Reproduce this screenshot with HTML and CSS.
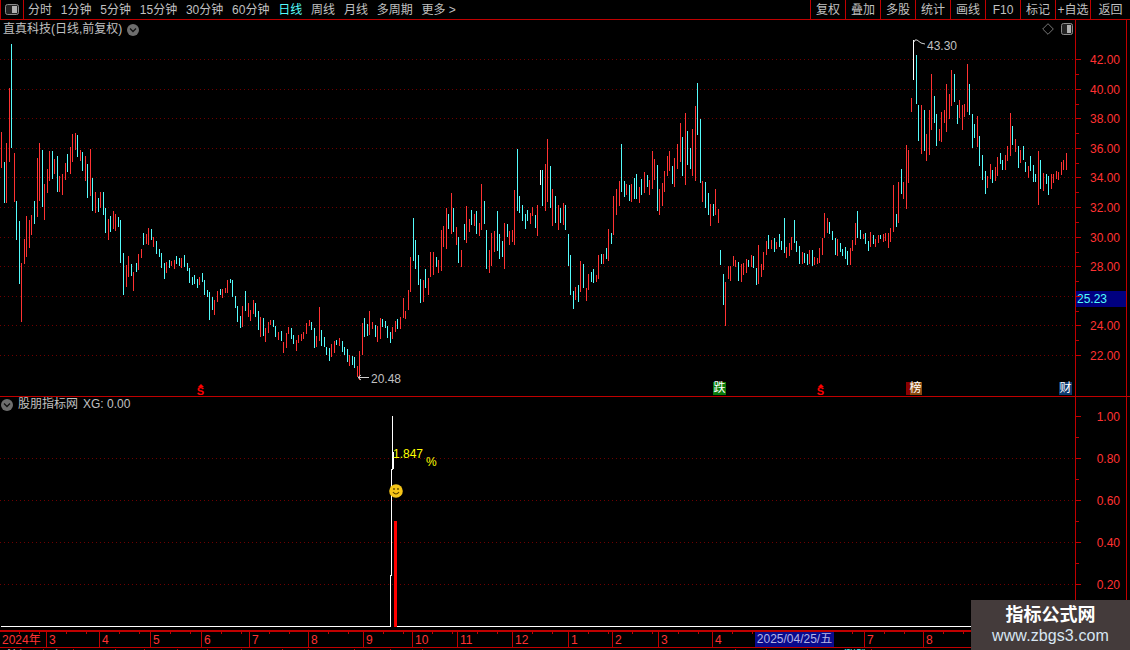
FILE: index.html
```html
<!DOCTYPE html>
<html lang="zh-CN">
<head>
  <meta charset="UTF-8">
  <title>直真科技 日线</title>
  <link rel="stylesheet" href="styles.css">
</head>
<body>

  <!-- Top toolbar -->
  <div class="toolbar">
    <div class="panel-btn">
      <svg width="14" height="11" viewBox="0 0 14 11">
        <rect x="0.5" y="0.5" width="13" height="10" rx="2" fill="#222" stroke="#8a8a8a"/>
        <rect x="7" y="2" width="5" height="7" fill="#b0b0b0"/>
      </svg>
    </div>
    <div class="periods">
      <span>分时</span>
      <span>1分钟</span>
      <span>5分钟</span>
      <span>15分钟</span>
      <span>30分钟</span>
      <span>60分钟</span>
      <span class="active">日线</span>
      <span>周线</span>
      <span>月线</span>
      <span>多周期</span>
      <span>更多 &gt;</span>
    </div>
    <div class="actions">
      <span>复权</span>
      <span>叠加</span>
      <span>多股</span>
      <span>统计</span>
      <span>画线</span>
      <span>F10</span>
      <span>标记</span>
      <span>+自选</span>
      <span>返回</span>
    </div>
  </div>

  <!-- Price chart -->
  <div class="panel panel-main">
    <div class="plot">
      <svg id="price-plot" class="plot-svg" viewBox="0 20 1075 376"></svg>
      <div class="plot-title">
        <span>直真科技(日线,前复权)</span>
        <svg class="chevron" width="12" height="12" viewBox="0 0 12 12">
          <circle cx="6" cy="6" r="6" fill="#6e6e6e"/>
          <path d="M3 4.5 L6 7.5 L9 4.5" fill="none" stroke="#111" stroke-width="1.3"/>
        </svg>
      </div>
      <div class="plot-tools">
        <svg width="12" height="12" viewBox="0 0 12 12">
          <path d="M6 0.7 L11.3 6 L6 11.3 L0.7 6 Z" fill="none" stroke="#777"/>
        </svg>
        <svg width="12" height="12" viewBox="0 0 12 12">
          <rect x="0.5" y="0.5" width="11" height="11" rx="2" fill="#222" stroke="#8a8a8a"/>
          <rect x="6" y="2" width="4" height="8" fill="#b0b0b0"/>
        </svg>
      </div>
      <div class="badge badge-down">跌</div>
      <div class="badge badge-rank">榜</div>
      <div class="badge badge-fin">财</div>
      <div class="s-mark s-mark-a"><i></i>S</div>
      <div class="s-mark s-mark-b"><i></i>S</div>
    </div>
    <svg id="price-axis" class="axis" viewBox="1076 20 50 376"></svg>
  </div>

  <!-- Indicator chart -->
  <div class="panel panel-sub">
    <div class="plot">
      <svg id="sub-plot" class="plot-svg" viewBox="0 397 1075 233"></svg>
      <div class="plot-title plot-title-sub">
        <svg class="chevron" width="12" height="12" viewBox="0 0 12 12">
          <circle cx="6" cy="6" r="6" fill="#6e6e6e"/>
          <path d="M3 4.5 L6 7.5 L9 4.5" fill="none" stroke="#111" stroke-width="1.3"/>
        </svg>
        <span>股朋指标网</span>
        <span>XG: 0.00</span>
      </div>
    </div>
    <svg id="sub-axis" class="axis" viewBox="1076 397 50 233"></svg>
  </div>

  <!-- Time axis -->
  <div class="time-axis" id="time-axis">
    <div class="cursor-date">2025/04/25/五</div>
  </div>

  <!-- Status bar, cut off by the window -->
  <div class="status-bar" id="status-bar"></div>

  <div class="watermark">
    <div class="watermark-name">指标公式网</div>
    <div class="watermark-url">www.zbgs3.com</div>
  </div>

  <script src="chart.js"></script>
</body>
</html>
```

FILE: styles.css
```css
/* Trading terminal, dark theme */

* {
  box-sizing: border-box;
  margin: 0;
  padding: 0;
}

html, body {
  width: 1130px;
  height: 650px;
  overflow: hidden;
}

body {
  position: relative;
  background: #000;
  color: #c0c0c0;
  font-family: "Liberation Sans", "Noto Sans CJK SC", sans-serif;
  font-size: 12px;
}

.toolbar {
  display: flex;
  height: 20px;
  border-bottom: 1px solid #c00000;
  line-height: 20px;
}

.panel-btn {
  display: flex;
  align-items: center;
  justify-content: center;
  width: 24px;
  border-left: 1px solid #c00000;
  border-right: 1px solid #c00000;
}

.periods {
  display: flex;
  flex: 1;
  gap: 8.8px;
  padding-left: 4px;
}

.periods .active {
  color: #54fcfc;
}

.actions {
  display: flex;
  width: 320px;
}

.actions span {
  width: 35px;
  border-left: 1px solid #c00000;
  text-align: center;
}

.actions span:last-child {
  flex: 1;
}

.panel {
  display: flex;
  border-bottom: 1px solid #c00000;
}

.panel-main {
  height: 377px;
}

.panel-sub {
  height: 234px;
}

.plot {
  position: relative;
  width: 1075px;
}

.plot-svg {
  display: block;
  width: 1075px;
  height: 100%;
}

.axis {
  display: block;
  width: 52px;
  height: 100%;
  border-left: 1px solid #c00000;
  border-right: 1px solid #c00000;
}

.plot-title {
  position: absolute;
  left: 3px;
  top: 2px;
  display: flex;
  align-items: center;
  gap: 5px;
  line-height: 15px;
}

.plot-title-sub {
  left: 1px;
  top: 0;
  gap: 5px;
}

.chevron {
  flex: none;
}

.plot-tools {
  position: absolute;
  right: 2px;
  top: 3px;
  display: flex;
  gap: 7px;
}

.badge {
  position: absolute;
  top: 362px;
  width: 13px;
  height: 13px;
  color: #fff;
  font-size: 12px;
  line-height: 13px;
  text-align: center;
}

.badge-down {
  left: 713px;
  background: #0a7a0a;
}

.badge-rank {
  left: 906px;
  width: 16px;
  padding-left: 3px;
  background: linear-gradient(90deg, #8c0000 0 4px, #8a4a10 4px);
}

.badge-fin {
  left: 1059px;
  background: #0f3a6e;
}

.s-mark {
  position: absolute;
  top: 364px;
  width: 9px;
  color: #ff0000;
  font-size: 11px;
  font-weight: bold;
  line-height: 9px;
  text-align: center;
}

.s-mark i {
  display: block;
  width: 0;
  height: 0;
  margin: 0 auto;
  border-left: 3px solid transparent;
  border-right: 3px solid transparent;
  border-bottom: 3px solid #ff0000;
}

.s-mark-a {
  left: 196px;
}

.s-mark-b {
  left: 816px;
}

.time-axis {
  position: relative;
  display: flex;
  height: 17px;
  border-top: 1px solid #c00000;
  border-bottom: 1px solid #c00000;
  color: #ff3232;
  font-size: 12px;
  line-height: 16px;
}

.time-cell {
  flex: none;
  padding-left: 2px;
  border-right: 1px solid #c00000;
  background: repeating-linear-gradient(90deg, transparent 0 19px, #c00000 19px 20px) 0 0 / 100% 2px no-repeat;
}

.cursor-date {
  position: absolute;
  left: 755px;
  top: 0;
  width: 79px;
  height: 15px;
  background: #0a0a8c;
  color: #b4b4e6;
  font-size: 12px;
  line-height: 15px;
  text-align: center;
  z-index: 1;
}

.status-bar {
  display: flex;
  height: 17px;
  padding-top: 1px;
  line-height: 14px;
}

.status-cell {
  flex: none;
  padding-left: 7px;
  border-right: 1px solid #c00000;
  color: #e0e0e0;
  white-space: nowrap;
}

.status-cell.rise {
  padding-left: 36px;
  color: #54fcfc;
}

.watermark {
  position: absolute;
  left: 971px;
  top: 600px;
  width: 159px;
  height: 50px;
  padding-top: 5px;
  background: #443b3b;
  text-align: center;
}

.watermark-name {
  color: #fff;
  font-size: 18px;
  font-weight: bold;
  line-height: 21px;
}

.watermark-url {
  color: #d8e6f2;
  font-size: 16px;
  letter-spacing: 0.1px;
  line-height: 20px;
}

/* chart drawing */

.grid {
  fill: none;
  stroke: #6e0000;
  stroke-dasharray: 1 3;
  shape-rendering: crispEdges;
}

.bars {
  fill: none;
  shape-rendering: crispEdges;
}

.bars-rise {
  stroke: #ff3232;
}

.bars-fall {
  stroke: #54fcfc;
}

.bars-plain {
  stroke: #fff;
}

.tick {
  fill: none;
  stroke: #c00000;
  shape-rendering: crispEdges;
}

.axis-label {
  fill: #ff3232;
  font-size: 12px;
  text-anchor: end;
}

.last-box {
  fill: #000080;
}

.last-label {
  fill: #54fcfc;
  font-size: 12px;
}

.peak-line {
  fill: none;
  stroke: #d0d0d0;
}

.peak-label {
  fill: #c0c0c0;
  font-size: 12px;
}

.signal {
  fill: none;
  stroke: #fff;
  shape-rendering: crispEdges;
}

.signal-bar {
  fill: #ff0000;
}

.signal-text {
  fill: #ffff00;
  font-size: 12px;
}

.smile-face {
  fill: #f5c518;
}

.smile-line {
  fill: none;
  stroke: #5a4300;
  stroke-width: 1.2;
}

.smile-eye {
  fill: #5a4300;
}
```

FILE: chart.js
```js
// Bars are read off the chart at 3x, so each segment has its own origin.
// r = up bar, c = down bar, w = flat bar; then x, top, bottom.
const segments = [
  [0, 120, "r4,36,144 c13,126,249 r19,69,249 r28,-96,126 c34,-228,84 r43,99,246 c49,243,360 c58,303,492 r64,429,606 r73,357,432 r79,288,411 r88,300,384 r94,285,345 c103,243,312 r112,114,291 r118,69,243 c127,90,261 r133,192,300 r142,147,219 r148,93,183 c157,93,177 r163,117,162 c172,108,216 r178,168,216 r187,162,225 r196,129,180 c202,102,156 r211,81,162 r217,42,126 r226,39,90 c232,45,111 r241,90,123 c247,96,153 r256,108,183 c262,132,234 r271,87,228 c277,174,273 r286,216,279 c295,234,276 r301,216,264 c310,216,285 c316,264,339 r325,297,360 c331,288,336 r340,273,327 r346,282,333 c355,291,321 c361,300,429 c370,399,525 r379,435,501 r385,408,471 c394,432,468 r400,456,513 c409,429,456 r415,402,450 r424,387,414 c430,339,375 r439,342,372 r445,324,375 c454,327,360 r460,351,381 c469,363,402 c478,387,411 c484,399,444 c493,429,477 r499,426,459 c508,420,444 r514,423,438 r523,420,447 c529,408,432 c538,414,438 r544,414,444 c553,405,441 c562,429,453 c568,444,489 c577,471,495 c583,465,492 c592,477,504 r598,471,495 c607,459,486 c613,480,525 c622,510,531 c628,516,600 c637,531,570 r643,540,585 r652,513,546 c661,507,525 r667,507,534 r676,504,519 r682,480,519 c691,477,489 c697,480,531 c706,528,564 c712,558,606 c721,588,624 r727,558,621 c736,513,573 r745,549,591 r751,570,603 r760,540,582 c766,549,591 c775,573,630 r781,591,651 c790,594,648 r796,624,666 r805,606,639 r811,600,615 c820,600,621 c826,618,651 r835,636,660 c844,633,663 r850,666,699 r859,639,684 r865,621,642 c874,624,657 c880,645,672 r889,660,693 r895,645,669 r904,642,663 r910,636,657 r919,609,642 r928,600,618 c934,606,630 c943,624,684 r949,648,681 r958,561,663 c964,630,678 c973,651,681 c979,681,705 c988,684,723 r994,672,711 r1003,663,699 c1009,660,675 r1018,654,678 c1027,663,696 c1033,681,705 c1042,687,726 r1048,705,738 c1057,708,735 c1063,711,744 r1072,738,771 r1078,693,780"],
  [350, 80, "r37,729,825 c43,714,771 c52,732,768 r58,693,765 r67,726,747 c76,735,771 r82,738,786 r91,714,777 c97,717,741 c106,723,744 c112,738,774 c121,756,789 r127,741,777 r136,723,756 c142,717,747 r151,711,747 r160,654,714 r166,693,717 r175,630,690 r181,531,636 c190,414,543 c196,480,567 c205,525,615 c211,597,669 r220,600,666 c226,567,624 r235,594,645 r241,516,591 r250,516,585 c259,531,561 r265,540,579 r274,450,573 r280,438,501 r289,384,507 c295,402,447 r304,339,462 c310,384,456 r319,441,495 c325,471,549 r334,510,561 c343,432,480 r349,378,489 r358,417,456 c364,390,435 r373,402,438 c379,393,462 r388,429,468 r394,312,450 c403,363,432 c409,450,567 r418,510,579 r424,459,558 r433,453,516 c442,393,513 c448,462,537 c457,483,531 r463,429,567 c472,432,471 r478,453,495 r487,450,486 r493,330,495 c502,207,393 c508,348,399 c517,375,423 c526,402,447 c532,390,423 r541,399,432 r547,381,408 c556,405,444 r562,375,468 w571,270,315 c577,270,378 r586,252,393 r592,177,366 c601,258,384 r607,327,438 c616,348,429 r625,375,450 c631,384,429 r640,369,435 c646,375,450 c655,462,558 c661,525,645 c670,633,687 r676,621,660 c685,615,666 r691,543,636 c700,552,624 r709,624,663 r715,582,630 c724,576,606 c730,567,609 r739,585,606 r745,525,597 c754,522,552 r760,522,552 c769,504,537 r775,447,543 c784,459,492 r790,348,465 r799,327,405 r808,303,378 c814,192,336 c823,303,351 r829,312,345 c838,315,363 r844,312,366 c853,294,357 c859,282,357 r868,321,369 c874,297,345 r883,276,339 c892,285,321 r898,300,345 r907,213,327 r913,237,300 c922,255,393 r928,327,405 r937,309,378 r943,273,336 r952,228,288 r958,213,273 c967,258,312 r973,234,321 r982,192,267 r991,129,246 c997,171,288 r1006,99,315 c1012,153,255 c1021,204,267 r1027,147,288 r1036,78,303 c1042,9,165 c1051,117,309 r1057,303,366 c1066,306,384 c1075,339,405 r1081,372,438 c1090,372,408 r1096,327,405 r1105,387,429"],
  [700, 130, "c61,360,405 c70,432,525 r76,456,588 r85,408,447 r91,408,453 r100,378,408 r106,390,411 c115,396,453 r124,402,456 r130,399,435 r139,387,429 c145,390,411 r154,375,411 c160,378,414 c169,414,465 r175,345,462 r184,402,441 r190,366,420 r199,333,375 c205,315,357 r214,330,357 c223,324,366 r229,336,357 c238,312,351 c244,333,360 c253,264,369 r259,351,384 r268,339,378 r274,321,360 c283,270,339 c289,333,366 c298,348,402 r307,366,402 c313,369,399 c322,372,405 r328,360,402 c337,360,408 r343,381,405 r352,384,402 r358,354,399 r367,324,375 r373,249,324 r382,264,309 c388,276,312 c397,303,330 c406,324,375 r412,327,378 c421,339,366 c427,357,378 c436,351,387 c442,363,405 r451,354,405 r457,330,363 r466,279,345 c472,243,324 c481,300,327 r490,312,327 c496,309,342 c505,333,363 r511,306,351 c520,315,342 r526,327,351 r535,315,339 c541,315,327 r550,312,336 r556,309,333 r565,309,354 r571,294,336 r580,165,306 c589,252,291 r595,156,279 c604,117,192 r610,156,207 r619,45,237 r625,60,159"],
  [880, 30, "r94,204,246 w100,30,150 c109,75,222 c115,225,333 r124,225,372 c133,240,363 r139,312,393 r148,240,375 r154,132,300 c163,198,279 c169,252,348 r178,297,333 r184,246,336 r193,240,279 r199,162,306 r208,192,267 r214,120,228 c223,132,216 c232,225,282 r238,210,264 r247,225,300 r253,222,261 r262,102,246 c268,162,255 c277,252,354 c283,282,324 r292,258,351 c298,318,408 c307,375,450 c316,423,492 r322,438,474 r331,402,447 c337,420,459 r346,411,453 r352,381,438 c361,369,402 c367,390,420 r376,375,420 r382,348,393 r391,249,378 c397,288,345 r406,327,366 c415,348,414 r421,360,399 c430,348,390 c436,396,426 r445,408,444 c451,378,423 c460,405,456 c466,432,456 r475,363,525 c481,390,477 r490,429,483 c499,432,462 c505,438,495 r514,432,477 r520,432,459 r529,423,447 r535,426,450 r544,396,435 r550,390,420 r559,369,420"]
];

const SVG_NS = "http://www.w3.org/2000/svg";

function add(svg, tag, attrs, text) {
  const node = document.createElementNS(SVG_NS, tag);
  for (const key in attrs) {
    node.setAttribute(key, attrs[key]);
  }
  if (text) {
    node.textContent = text;
  }
  svg.appendChild(node);
  return node;
}

function drawGrid(svg, levels) {
  const d = levels.map(l => "M0 " + (l.y + 0.5) + "H1075").join("");
  add(svg, "path", { class: "grid", d: d });
}

function drawAxis(svg, levels) {
  let d = "";
  levels.forEach((l, i) => {
    d += "M1076 " + (l.y + 0.5) + "h5";
    const next = levels[i + 1];
    if (next) {
      d += "M1076 " + (Math.round((l.y + next.y) / 2) + 0.5) + "h3";
    }
    add(svg, "text", { class: "axis-label", x: 1120, y: l.y + 5 }, l.label);
  });
  add(svg, "path", { class: "tick", d: d });
}

// Price panel
const pricePlot = document.getElementById("price-plot");
const priceAxis = document.getElementById("price-axis");
const priceLevels = [
  { y: 59, label: "42.00" },
  { y: 89, label: "40.00" },
  { y: 118, label: "38.00" },
  { y: 148, label: "36.00" },
  { y: 177, label: "34.00" },
  { y: 207, label: "32.00" },
  { y: 237, label: "30.00" },
  { y: 266, label: "28.00" },
  { y: 296, label: "" },
  { y: 325, label: "24.00" },
  { y: 355, label: "22.00" }
];

drawGrid(pricePlot, priceLevels);

const paths = { r: "", c: "", w: "" };
segments.forEach(([ox, oy, list]) => {
  list.split(" ").forEach(item => {
    const [x, top, bottom] = item.slice(1).split(",").map(Number);
    const px = ox + Math.floor(x / 3) + 0.5;
    paths[item[0]] += "M" + px + " " + Math.round(oy + top / 3) + "V" + Math.round(oy + bottom / 3);
  });
});
add(pricePlot, "path", { class: "bars bars-rise", d: paths.r });
add(pricePlot, "path", { class: "bars bars-fall", d: paths.c });
add(pricePlot, "path", { class: "bars bars-plain", d: paths.w });

add(pricePlot, "path", { class: "peak-line", d: "M914 42L915 40H917L921 43L925 44" });
add(pricePlot, "text", { class: "peak-label", x: 927, y: 50 }, "43.30");
add(pricePlot, "path", { class: "peak-line", d: "M369 377.5H358L361 375M358 377.5L361 380" });
add(pricePlot, "text", { class: "peak-label", x: 371, y: 383 }, "20.48");

add(priceAxis, "rect", { class: "last-box", x: 1076, y: 291, width: 50, height: 16 });
add(priceAxis, "text", { class: "last-label", x: 1077, y: 303 }, "25.23");
drawAxis(priceAxis, priceLevels);

// Indicator panel
const subPlot = document.getElementById("sub-plot");
const subAxis = document.getElementById("sub-axis");
const subLevels = [
  { y: 416, label: "1.00" },
  { y: 458, label: "0.80" },
  { y: 500, label: "0.60" },
  { y: 542, label: "0.40" },
  { y: 584, label: "0.20" }
];

drawGrid(subPlot, subLevels.slice(1));
add(subPlot, "path", {
  class: "signal",
  d: "M1 626.5H390.5V575H391.5V469H392.5V416M393.5 452V469M397 626.5H1075"
});
add(subPlot, "rect", { class: "signal-bar", x: 394, y: 521, width: 3, height: 106 });
add(subPlot, "text", { class: "signal-text", x: 393, y: 458 }, "1.847");
add(subPlot, "text", { class: "signal-text", x: 426, y: 466 }, "%");
add(subPlot, "circle", { class: "smile-face", cx: 396, cy: 491, r: 6.8 });
add(subPlot, "circle", { class: "smile-eye", cx: 394, cy: 489, r: 0.9 });
add(subPlot, "circle", { class: "smile-eye", cx: 398, cy: 489, r: 0.9 });
add(subPlot, "path", { class: "smile-line", d: "M393 492Q396 496 399 492" });
drawAxis(subAxis, subLevels);

// Time axis: label, x of the separator that closes the cell
const months = [
  ["2024年", 46], ["3", 99], ["4", 150], ["5", 201], ["6", 249], ["7", 308],
  ["8", 363], ["9", 412], ["10", 457], ["11", 512], ["12", 568], ["1", 612],
  ["2", 658], ["3", 712], ["4", 864], ["7", 923], ["8", 1130]
];
const timeAxis = document.getElementById("time-axis");
let left = 0;
months.forEach(([label, sep]) => {
  const cell = document.createElement("div");
  cell.className = "time-cell";
  cell.style.width = (sep + 1 - left) + "px";
  cell.textContent = label;
  timeAxis.appendChild(cell);
  left = sep + 1;
});

// Status bar: only the top of the text is inside the window
const statusCells = [
  ["沪深", 44], ["上", 74], ["", 116], ["", 145], ["", 178], ["", 208], ["", 242],
  ["", 283], ["", 309], ["", 355], ["", 391], ["", 423], ["", 736], ["", 767],
  ["", 808], ["涨跌", 872], ["", 1130]
];
const statusBar = document.getElementById("status-bar");
left = 0;
statusCells.forEach(([label, right], i) => {
  const cell = document.createElement("div");
  cell.className = i === 15 ? "status-cell rise" : "status-cell";
  cell.style.width = (right - left) + "px";
  cell.textContent = label;
  statusBar.appendChild(cell);
  left = right;
});
```
